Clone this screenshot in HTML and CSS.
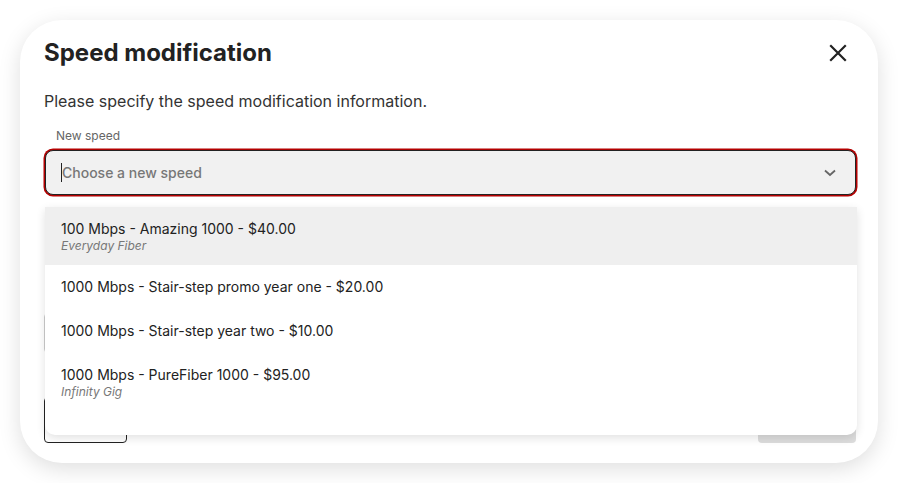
FILE: index.html
```html
<!DOCTYPE html>
<html lang="en">
<head>
    <meta charset="UTF-8">
    <meta name="viewport" content="width=device-width, initial-scale=1.0">
    <title>Speed modification</title>
    <link rel="stylesheet" href="styles.css">
</head>
<body>
    <div class="pagina">
        <div class="modal">
            <div class="cabecalho">
                <h1 class="titulo">Speed modification</h1>
                <button class="fechar" aria-label="Close">
                    <svg width="18" height="18" viewBox="0 0 18 18">
                        <path d="M2 2 L16 16 M16 2 L2 16" stroke="#222" stroke-width="2.2" stroke-linecap="square" fill="none"/>
                    </svg>
                </button>
            </div>
            <p class="descricao">Please specify the speed modification information.</p>

            <div class="campo">
                <label class="rotulo">New speed</label>
                <div class="seletor">
                    <span class="cursor"></span>
                    <span class="placeholder">Choose a new speed</span>
                    <svg class="seta" width="14" height="8" viewBox="0 0 14 8">
                        <path d="M2 1.5 L7 6 L12 1.5" stroke="#666" stroke-width="1.8" fill="none"/>
                    </svg>
                </div>

                <!-- lista aberta por cima do resto do modal -->
                <ul class="opcoes">
                    <li class="opcao ativa">
                        <span class="principal">100 Mbps - Amazing 1000 - $40.00</span>
                        <span class="sub">Everyday Fiber</span>
                    </li>
                    <li class="opcao"><span class="principal">1000 Mbps - Stair-step promo year one - $20.00</span></li>
                    <li class="opcao"><span class="principal">1000 Mbps - Stair-step year two - $10.00</span></li>
                    <li class="opcao">
                        <span class="principal">1000 Mbps - PureFiber 1000 - $95.00</span>
                        <span class="sub">Infinity Gig</span>
                    </li>
                </ul>
            </div>

            <div class="outro-campo"></div>

            <div class="rodape">
                <button class="botao-cancelar">Cancel</button>
                <button class="botao-salvar" disabled>Save</button>
            </div>
        </div>
    </div>
</body>
</html>
```

FILE: styles.css
```css
* {
    margin: 0;
    padding: 0;
    box-sizing: border-box;
}
body {
    background-color: #fff;
    font-family: Inter, "Noto Sans", sans-serif;
    color: #222;
}
.pagina {
    padding: 20px;
}
.modal {
    width: 858px;
    height: 443px;
    background-color: #fff;
    border-radius: 42px;
    box-shadow: 0 6px 22px rgba(0, 0, 0, 0.13);
    padding: 17px 24px 20px 24px;
    display: flex;
    flex-direction: column;
}
.cabecalho {
    display: flex;
    justify-content: space-between;
    align-items: center;
}
.titulo {
    font-size: 24px;
    font-weight: 700;
    line-height: 32px;
    color: #222;
}
.fechar {
    background: none;
    border: none;
    width: 18px;
    height: 18px;
    margin-right: 7px;
    cursor: pointer;
    display: flex;
}
.descricao {
    margin-top: 20px;
    font-size: 16px;
    line-height: 24px;
    color: #333;
}
.campo {
    position: relative; /* para a lista ficar por cima */
    margin-top: 15px;
}
.rotulo {
    display: block;
    font-size: 12px;
    line-height: 16px;
    color: #666;
    padding-left: 12px;
}
.seletor {
    margin-top: 6px;
    height: 45px;
    margin-left: 1px;
    margin-right: -2px;
    background-color: #f1f1f1;
    border: 1px solid #222;
    border-radius: 8px;
    box-shadow: 0 0 0 1.5px #b30000;
    display: flex;
    align-items: center;
    padding: 0 18px 0 15px;
}
.cursor {
    width: 1px;
    height: 19px;
    background-color: #222;
}
.placeholder {
    flex: 1;
    font-size: 14px;
    font-weight: 500;
    color: #777;
}
.opcoes {
    list-style: none;
    position: absolute;
    top: calc(100% + 12px);
    left: 1px;
    right: -3px;
    background-color: #fff;
    border-radius: 0 0 10px 10px;
    box-shadow: 0 3px 10px rgba(0, 0, 0, 0.12);
    padding-bottom: 24px;
    z-index: 2;
}
.opcao {
    padding: 12px 16px;
    display: flex;
    flex-direction: column;
}
.opcao.ativa {
    background-color: #efefef;
}
.principal {
    font-size: 14px;
    line-height: 20px;
    color: #222;
}
.sub {
    font-size: 12px;
    line-height: 14px;
    font-style: italic;
    color: #777;
}
.outro-campo {
    margin-top: 118px;
    height: 40px;
    border: 1px solid #ccc;
    border-radius: 4px;
}
.rodape {
    margin-top: auto;
    display: flex;
    justify-content: space-between;
    margin-right: -2px;
}
.botao-cancelar {
    width: 83px;
    height: 46px;
    background: #fff;
    border: 1px solid #222;
    border-radius: 4px;
    font-family: inherit;
    font-size: 14px;
}
.botao-salvar {
    width: 98px;
    height: 46px;
    background-color: #ddd;
    border: none;
    border-radius: 4px;
    font-family: inherit;
    font-size: 14px;
    color: #999;
}
```
